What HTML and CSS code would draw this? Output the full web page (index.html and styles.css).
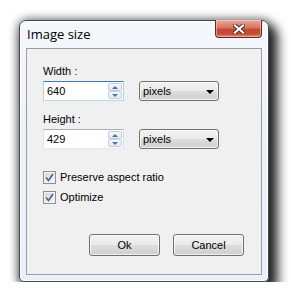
FILE: index.html
```html
<!DOCTYPE html>
<html lang="en">
<head>
    <meta charset="UTF-8">
    <title>Image size</title>
    <link rel="stylesheet" href="styles.css">
</head>
<body>
    <div class="window">
        <div class="titlebar">
            <span class="title">Image size</span>
            <button class="close-btn" aria-label="Close">
                <svg width="12" height="10" viewBox="0 0 12 10">
                    <path d="M2 1.5 L10 8.5 M10 1.5 L2 8.5" stroke="#4a2a24" stroke-width="4" stroke-linecap="square" fill="none"/>
                    <path d="M2 1.5 L10 8.5 M10 1.5 L2 8.5" stroke="#ffffff" stroke-width="2.2" stroke-linecap="square" fill="none"/>
                </svg>
            </button>
        </div>

        <div class="client">
            <div class="field">
                <div class="field-label">Width :</div>
                <div class="field-row">
                    <div class="spin-input focused">
                        <span class="spin-value">640</span>
                        <div class="spinner">
                            <span class="spin-btn"><span class="arrow-up"></span></span>
                            <span class="spin-btn"><span class="arrow-down"></span></span>
                        </div>
                    </div>
                    <div class="combo">
                        <span>pixels</span>
                        <span class="combo-arrow"></span>
                    </div>
                </div>
            </div>

            <div class="field">
                <div class="field-label">Height :</div>
                <div class="field-row">
                    <div class="spin-input">
                        <span class="spin-value">429</span>
                        <div class="spinner">
                            <span class="spin-btn"><span class="arrow-up"></span></span>
                            <span class="spin-btn"><span class="arrow-down"></span></span>
                        </div>
                    </div>
                    <div class="combo">
                        <span>pixels</span>
                        <span class="combo-arrow"></span>
                    </div>
                </div>
            </div>

            <div class="checks">
                <label class="check">
                    <span class="check-box">
                        <svg width="9" height="9" viewBox="0 0 9 9"><path d="M1 4.5 L3.5 7.5 L8 1" stroke="#4a5f97" stroke-width="1.6" fill="none"/></svg>
                    </span>
                    Preserve aspect ratio
                </label>
                <label class="check">
                    <span class="check-box">
                        <svg width="9" height="9" viewBox="0 0 9 9"><path d="M1 4.5 L3.5 7.5 L8 1" stroke="#4a5f97" stroke-width="1.6" fill="none"/></svg>
                    </span>
                    Optimize
                </label>
            </div>

            <div class="actions">
                <button class="push-btn">Ok</button>
                <button class="push-btn">Cancel</button>
            </div>
        </div>
    </div>
</body>
</html>
```

FILE: styles.css
```css
* {
    margin: 0;
    padding: 0;
    box-sizing: border-box;
}

body {
    background: #ffffff;
    padding: 20px 0 0 19px;
    font-family: "Liberation Sans", Arial, sans-serif;
    font-size: 11px;
    color: #000;
}

/* window frame */
.window {
    width: 250px;
    height: 262px;
    display: flex;
    flex-direction: column;
    padding: 0 6px 6px;
    border: 1px solid #46494d;
    border-radius: 7px 7px 5px 5px;
    background: linear-gradient(to bottom, #f4f7fb 0%, #eef3f9 40%, #e9f0f7 100%);
    box-shadow: inset 0 0 0 1px rgba(255, 255, 255, 0.8),
                0 0 9px 2px rgba(0, 0, 0, 0.4),
                6px 8px 11px 3px rgba(0, 0, 0, 0.8);
}

.titlebar {
    height: 27px;
    display: flex;
    align-items: flex-start;
}

.title {
    margin: 5px 0 0 1px;
    font-family: "Open Sans", "Noto Sans", sans-serif;
    font-size: 13px;
    line-height: 16px;
    color: #000;
}

.close-btn {
    margin-left: auto;
    width: 47px;
    height: 18px;
    margin-top: -1px;
    border: 1px solid #5e2a22;
    border-top: none;
    border-radius: 0 0 4px 4px;
    background: linear-gradient(to bottom, #e9a99a 0%, #d9735f 45%, #c24a32 55%, #c44a31 80%, #dd8a6c 100%);
    box-shadow: inset 0 0 0 1px rgba(255, 220, 210, 0.5);
    display: flex;
    align-items: center;
    justify-content: center;
}

/* client area */
.client {
    flex: 1;
    border: 1px solid #9a9da2;
    background: #f0f0f0;
    padding: 16px 17px 0 16px;
    display: flex;
    flex-direction: column;
}

.field + .field {
    margin-top: 12px;
}

.field-label {
    line-height: 13px;
    margin-bottom: 3px;
}

.field-row {
    display: flex;
    gap: 15px;
    align-items: center;
}

.spin-input {
    width: 81px;
    height: 20px;
    display: flex;
    align-items: center;
    background: #fff;
    border: 1px solid #abadb3;
    border-left-color: #e2e3ea;
    border-right-color: #dbdfe6;
    border-bottom-color: #e3e9ef;
    padding: 0 1px 0 3px;
}

.spin-input.focused {
    border-color: #3d7bad;
    border-left-color: #b5cfe7;
    border-right-color: #b5cfe7;
    border-bottom-color: #b7d9ed;
}

.spin-value {
    flex: 1;
    line-height: 18px;
}

.spinner {
    display: flex;
    flex-direction: column;
}

.spin-btn {
    width: 14px;
    height: 8px;
    border: 1px solid #c4cfdd;
    border-radius: 2px;
    background: linear-gradient(to bottom, #f6f8fb, #e3e9f1);
    display: flex;
    align-items: center;
    justify-content: center;
}

.arrow-up {
    border-left: 3px solid transparent;
    border-right: 3px solid transparent;
    border-bottom: 3px solid #4e6fa0;
}

.arrow-down {
    border-left: 3px solid transparent;
    border-right: 3px solid transparent;
    border-top: 3px solid #4e6fa0;
}

.combo {
    width: 80px;
    height: 20px;
    display: flex;
    align-items: center;
    padding: 0 4px 0 3px;
    border: 1px solid #707070;
    border-radius: 3px;
    background: linear-gradient(to bottom, #f2f2f2 0%, #ebebeb 50%, #dddddd 51%, #cfcfcf 100%);
    box-shadow: inset 0 0 0 1px rgba(255, 255, 255, 0.7);
}

.combo span:first-child {
    flex: 1;
}

.combo-arrow {
    border-left: 4px solid transparent;
    border-right: 4px solid transparent;
    border-top: 4px solid #000;
    margin-top: 1px;
}

/* checkboxes */
.checks {
    margin-top: 22px;
    display: flex;
    flex-direction: column;
    gap: 7px;
}

.check {
    display: flex;
    align-items: center;
    gap: 4px;
    line-height: 13px;
}

.check-box {
    width: 13px;
    height: 13px;
    border: 1px solid #8e8f8f;
    background: linear-gradient(135deg, #d2d2d2 0%, #ececec 60%, #f8f8f8 100%);
    box-shadow: inset 0 0 0 1px #f4f4f4;
    display: flex;
    align-items: center;
    justify-content: center;
}

/* buttons */
.actions {
    margin-top: 30px;
    display: flex;
    justify-content: flex-end;
    gap: 13px;
}

.push-btn {
    width: 71px;
    height: 22px;
    font-family: "Liberation Sans", Arial, sans-serif;
    font-size: 11px;
    color: #000;
    border: 1px solid #707070;
    border-radius: 3px;
    background: linear-gradient(to bottom, #f2f2f2 0%, #ebebeb 50%, #dddddd 51%, #cfcfcf 100%);
    box-shadow: inset 0 0 0 1px rgba(255, 255, 255, 0.7);
}
```
